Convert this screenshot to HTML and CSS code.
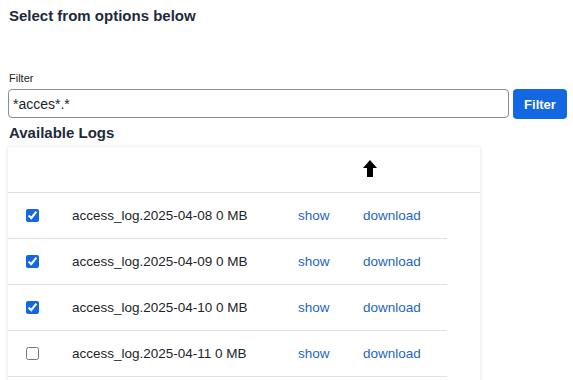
FILE: index.html
```html
<!doctype html>
<html lang="en">
  <head>
    <meta charset="UTF-8" />
    <meta name="viewport" content="width=device-width, initial-scale=1.0" />
    <title>Logs</title>
    <link rel="stylesheet" href="styles.css">
  </head>
  <body>
    <!-- Title -->
    <h1 class="title">Select from options below</h1>

    <!-- Filter form -->
    <div class="filter">
      <label class="filter-label" for="pattern">Filter</label>
      <div class="filter-row">
        <input id="pattern" type="text" value="*acces*.*" />
        <button class="filter-btn">Filter</button>
      </div>
    </div>

    <h2 class="subtitle">Available Logs</h2>

    <!-- Logs table -->
    <div class="logs">
      <div class="logs-head">
        <div class="col-check"></div>
        <div class="col-name"></div>
        <div class="col-show"></div>
        <div class="col-dl">
          <svg class="sort-icon" width="14" height="17" viewBox="0 0 14 17">
            <path d="M7 0 L14 8 L10 8 L10 17 L4 17 L4 8 L0 8 Z" fill="#000" />
          </svg>
        </div>
      </div>
      <table class="logs-body">
        <tr>
          <td class="col-check"><input type="checkbox" checked /></td>
          <td class="col-name">access_log.2025-04-08 0 MB</td>
          <td class="col-show"><a href="#">show</a></td>
          <td class="col-dl"><a href="#">download</a></td>
        </tr>
        <tr>
          <td class="col-check"><input type="checkbox" checked /></td>
          <td class="col-name">access_log.2025-04-09 0 MB</td>
          <td class="col-show"><a href="#">show</a></td>
          <td class="col-dl"><a href="#">download</a></td>
        </tr>
        <tr>
          <td class="col-check"><input type="checkbox" checked /></td>
          <td class="col-name">access_log.2025-04-10 0 MB</td>
          <td class="col-show"><a href="#">show</a></td>
          <td class="col-dl"><a href="#">download</a></td>
        </tr>
        <tr>
          <td class="col-check"><input type="checkbox" /></td>
          <td class="col-name">access_log.2025-04-11 0 MB</td>
          <td class="col-show"><a href="#">show</a></td>
          <td class="col-dl"><a href="#">download</a></td>
        </tr>
      </table>
    </div>
  </body>
</html>
```

FILE: styles.css
```css
* {
  margin: 0;
  padding: 0;
  box-sizing: border-box;
}

body {
  font-family: "Liberation Sans", Arial, sans-serif;
  color: #212529;
  background: #fff;
  padding: 0 8px;
  overflow: hidden;
}

.title {
  font-size: 15px;
  font-weight: bold;
  color: #1e2a3b;
  line-height: 20px;
  padding-top: 6px;
  padding-left: 1px;
}

.filter {
  margin-top: 45px;
}

.filter-label {
  display: block;
  font-size: 11px;
  line-height: 14px;
  padding-left: 1px;
  margin-bottom: 4px;
}

.filter-row {
  display: flex;
  gap: 4px;
}

.filter-row input {
  flex-shrink: 0;
  width: 501px;
  height: 29px;
  border: 1px solid #868e96;
  border-radius: 4px;
  padding: 0 4px;
  font-family: inherit;
  font-size: 14px;
  color: #212529;
}

.filter-btn {
  flex-shrink: 0;
  width: 54px;
  height: 30px;
  border: none;
  border-radius: 4px;
  background: #1367e2;
  color: white;
  font-family: inherit;
  font-weight: bold;
  font-size: 13px;
}

.subtitle {
  font-size: 15px;
  font-weight: bold;
  color: #1e2a3b;
  line-height: 20px;
  margin-top: 4px;
  padding-left: 1px;
}

.logs {
  width: 472px;
  margin-top: 4px;
  box-shadow: 0 0 4px rgba(0, 0, 0, 0.12);
  height: 240px;
}

.logs-head {
  display: flex;
  height: 46px;
  border-bottom: 1px solid #dee2e6;
  align-items: center;
}

.col-check {
  width: 48px;
  text-align: center;
}

.col-name {
  width: 226px;
  padding-left: 16px;
}

.col-show {
  width: 65px;
  padding-left: 16px;
}

.col-dl {
  width: 100px;
  padding-left: 16px;
}

.sort-icon {
  display: block;
  margin-top: -2px;
}

.logs-body {
  width: 439px;
  border-collapse: separate;
  border-spacing: 0;
  font-size: 13.5px;
}

.logs-body td {
  height: 46px;
  border-bottom: 1px solid #dee2e6;
  vertical-align: middle;
}

.logs-body input {
  width: 13px;
  height: 13px;
  display: block;
  margin: 0 auto;
  accent-color: #1367e2;
}

.logs-body a {
  color: #2466c0;
  text-decoration: none;
}
```
